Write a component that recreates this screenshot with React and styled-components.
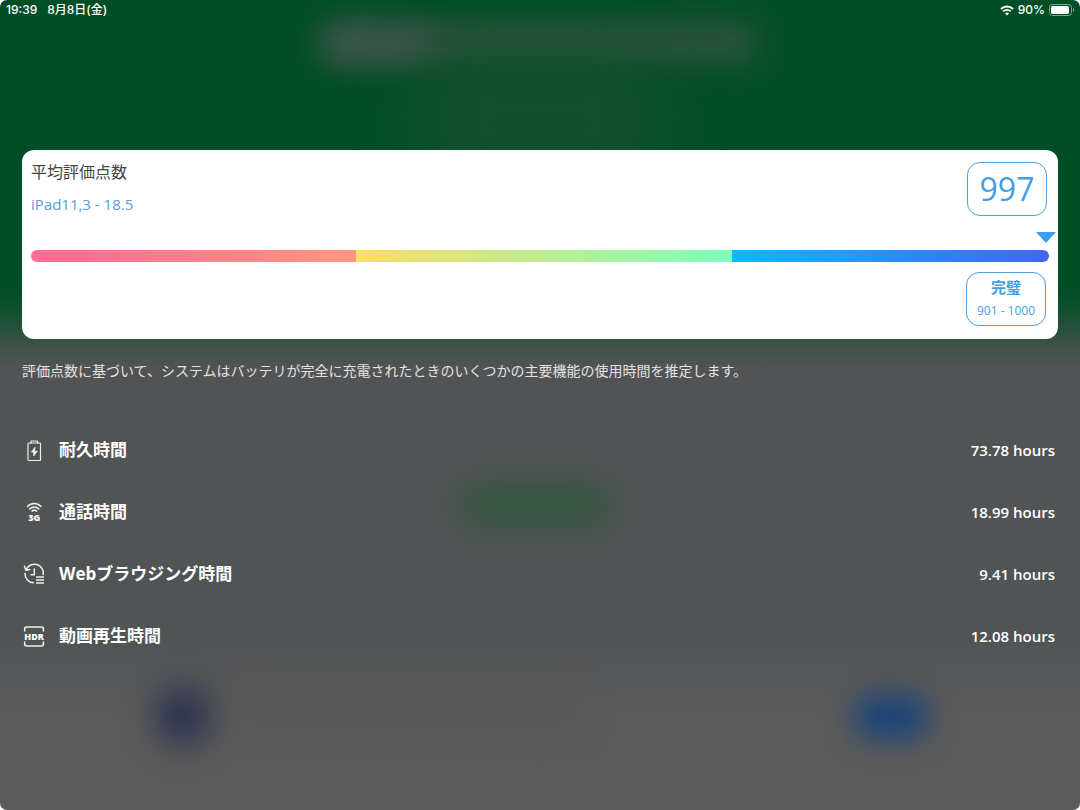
import React from "react";
import styled, { createGlobalStyle } from "styled-components";

const latin = `"Open Sans", "Noto Sans CJK JP", sans-serif`;

const GlobalStyle = createGlobalStyle`
  * {
    box-sizing: border-box;
  }

  body {
    margin: 0;
    background: #fff;
    font-family: ${latin};
  }

  h1, p, ul {
    margin: 0;
    padding: 0;
  }
`

const Page = styled.div`
  position: relative;
  overflow: hidden;
  isolation: isolate;
  min-height: 100vh;
  border-radius: 7px;
  color: #fff;
  background: linear-gradient(
    #004e26 0,
    #004e26 290px,
    #12502f 312px,
    #2e5140 334px,
    #43524b 350px,
    #515355 368px,
    #515455 450px,
    #515455 640px,
    #575859 690px,
    #5a5a5a 720px
  );
`

const Glow = styled.span`
  position: absolute;
  z-index: -1;
  left: ${(p) => p.$x};
  top: ${(p) => p.$y}px;
  width: ${(p) => p.$w}px;
  height: ${(p) => p.$h}px;
  border-radius: 24px;
  background: ${(p) => p.$color};
  filter: blur(${(p) => p.$blur || 16}px);
  transform: translateX(-50%);
`

const StatusBar = styled.header`
  display: flex;
  align-items: center;
  justify-content: space-between;
  height: 20px;
  padding: 0 5px 0 6px;
  font-family: Inter, "Noto Sans CJK JP", sans-serif;
  font-size: 12px;
  font-weight: 500;
  line-height: 20px;
`

const StatusGroup = styled.div`
  display: flex;
  align-items: center;
  gap: ${(p) => p.$gap}px;
`

const Main = styled.main`
  padding: 130px 22px 0;
`

const Card = styled.section`
  padding: 12px 9px 13px;
  border-radius: 12px;
  background: #fff;
`

const CardTop = styled.div`
  display: flex;
  justify-content: space-between;
  padding-right: 2px;
`

const Title = styled.h1`
  color: #444;
  font-size: 16px;
  font-weight: 400;
  line-height: 20px;
`

const Device = styled.p`
  margin-top: 12px;
  color: #5a9bd8;
  font-size: 15px;
  line-height: 20px;
`

const Badge = styled.div`
  display: flex;
  flex-direction: column;
  align-items: center;
  justify-content: center;
  width: 80px;
  height: 54px;
  border: 1px solid #4f9fdb;
  border-radius: 13px;
  color: #429fe6;
`

const Score = styled.strong`
  font-size: 32px;
  font-weight: 400;
  line-height: 52px;
`

const Grade = styled.strong`
  font-size: 15px;
  font-weight: 700;
  line-height: 24px;
`

const Range = styled.span`
  font-size: 12px;
  line-height: 24px;
`

const Gauge = styled.div`
  position: relative;
  padding: 34px 0 10px;
`

const Track = styled.div`
  display: grid;
  grid-template-columns: 325fr 375fr 317fr;
  height: 12px;
  overflow: hidden;
  border-radius: 6px;
`

const Segment = styled.span`
  background: linear-gradient(90deg, ${(p) => p.$from}, ${(p) => p.$to});
`

const Marker = styled.svg`
  position: absolute;
  top: 16px;
  width: 20px;
  height: 11px;
  transform: translateX(-50%);
`

const CardBottom = styled.div`
  display: flex;
  justify-content: flex-end;
  padding-right: 3px;
`

const Note = styled.p`
  margin-top: 21px;
  color: #e2e2e2;
  font-family: "Noto Sans CJK JP", sans-serif;
  font-size: 14px;
  line-height: 20px;
`

const List = styled.ul`
  margin-top: 39px;
  list-style: none;
`

const Row = styled.li`
  display: flex;
  align-items: center;
  height: 62px;
  padding-right: 3px;
`

const Icon = styled.svg`
  flex: none;
  width: 24px;
  height: 24px;
  margin-right: 13px;
  fill: none;
  stroke: #eee;
  stroke-linecap: round;
  stroke-linejoin: round;
`

const Label = styled.span`
  flex: 1;
  font-size: 17px;
  font-weight: 700;
  line-height: 24px;
`

const Value = styled.span`
  font-size: 15px;
  font-weight: 600;
  line-height: 24px;
`

const IconText = styled.text`
  fill: #fff;
  stroke: none;
  font-family: "Open Sans", sans-serif;
  font-weight: 800;
  text-anchor: middle;
`

const BatteryIcon = () => (
  <Icon viewBox="0 0 24 24" strokeWidth="1.2" aria-hidden="true">
    <rect x="6" y="5" width="12.5" height="17.5" rx="0.8" />
    <path d="M9 5V3h6.500v2" />
    <path d="M12.900 9.500l-3.500 4.500h2.300v4l3.600-4.700h-2.400z" fill="#eee" strokeWidth=".8" />
  </Icon>
)

const SignalIcon = () => (
  <Icon viewBox="0 0 24 24" strokeWidth="1.5" aria-hidden="true">
    <path d="M5.500 6.500c3.800-4 9.700-4 13.500 0M7.800 8.900c2.500-2.500 6.400-2.500 8.900 0M10 11.100c1.300-1.100 3.200-1.100 4.500 0" />
    <IconText x="12.2" y="21" fontSize="9">3G</IconText>
  </Icon>
)

const HistoryIcon = () => (
  <Icon viewBox="0 0 24 24" strokeWidth="1.5" aria-hidden="true">
    <path d="M4.200 7.500A9 9 0 0 1 21.300 12.500M3 11.500a9 9 0 0 0 8.500 9.300" />
    <path d="M2.500 4.200l1.300 4 4.100-.8M12.300 7v5.800H9" />
    <path d="M14 15h8M14 18h8M14 21h8" strokeLinecap="butt" />
  </Icon>
)

const HdrIcon = () => (
  <Icon viewBox="0 0 24 24" strokeWidth="1.6" aria-hidden="true">
    <path d="M2.700 7V5q0-2 2-2h14.700q2 0 2 2v2M2.700 18v2q0 2 2 2h14.700q2 0 2-2v-2" />
    <IconText x="12.100" y="16" fontSize="9">HDR</IconText>
  </Icon>
)

const WifiGlyph = () => (
  <svg width="14" height="11" viewBox="0 0 14 11" fill="none" stroke="#fff" strokeWidth="1.9" aria-label="Wi-Fi">
    <path d="M.9 4c3.500-3.300 8.700-3.300 12.200 0M3.200 6.400c2.200-2 5.400-2 7.600 0" />
    <path d="M7 10.500L4.900 8.300c1.200-1.100 3-1.100 4.200 0z" fill="#fff" stroke="none" />
  </svg>
)

const BatteryGlyph = () => (
  <svg width="26" height="12" viewBox="0 0 26 12" aria-hidden="true">
    <rect x=".5" y=".5" width="22" height="11" rx="3" fill="none" stroke="#7fa690" />
    <rect x="2" y="2" width="18" height="8" rx="1.700" fill="#fff" />
    <path d="M24 4c1.600.6 1.600 3.400 0 4z" fill="#7fa690" />
  </svg>
)

const score = 997;

const segments = [
  { from: "#ff6a95", to: "#ff9580" },
  { from: "#ffdc68", to: "#7dffbb" },
  { from: "#10b8ff", to: "#4366f2" },
]

const estimates = [
  { icon: BatteryIcon, label: "耐久時間", hours: "73.78" },
  { icon: SignalIcon, label: "通話時間", hours: "18.99" },
  { icon: HistoryIcon, label: "Webブラウジング時間", hours: "9.41" },
  { icon: HdrIcon, label: "動画再生時間", hours: "12.08" },
]

// soft shapes of the screen that lies under the overlay
const Backdrop = () => (
  <>
    <Glow $x="50%" $y={22} $w={440} $h={42} $color="#2f5340" />
    <Glow $x="35%" $y={30} $w={110} $h={28} $color="#435650" />
    <Glow $x="50%" $y={60} $w={240} $h={110} $color="#14502f" $blur={28} />
    <Glow $x="49.500%" $y={486} $w={150} $h={38} $color="#30573f" />
    <Glow $x="16.9%" $y={688} $w={54} $h={56} $color="#2b3150" />
    <Glow $x="82.500%" $y={694} $w={76} $h={46} $color="#1c457a" $blur={14} />
    <Glow $x="38%" $y={698} $w={340} $h={28} $color="#555" />
  </>
)

const App = () => {
  return (
    <>
      <GlobalStyle />
      <Page>
        <Backdrop />
        <StatusBar>
          <StatusGroup $gap={10}>
            <span>19:39</span>
            <span>8月8日(金)</span>
          </StatusGroup>
          <StatusGroup $gap={4}>
            <WifiGlyph />
            <span>90%</span>
            <BatteryGlyph />
          </StatusGroup>
        </StatusBar>
        <Main>
          <Card>
            <CardTop>
              <div>
                <Title>平均評価点数</Title>
                <Device>iPad11,3 - 18.5</Device>
              </div>
              <Badge>
                <Score>{score}</Score>
              </Badge>
            </CardTop>
            <Gauge>
              <Marker viewBox="0 0 20 11" style={{ left: `${score / 10}%` }} aria-hidden="true">
                <path d="M0 0h20L10 11z" fill="#3d9fea" />
              </Marker>
              <Track>
                {segments.map((s) => (
                  <Segment key={s.from} $from={s.from} $to={s.to} />
                ))}
              </Track>
            </Gauge>
            <CardBottom>
              <Badge>
                <Grade>完璧</Grade>
                <Range>901 - 1000</Range>
              </Badge>
            </CardBottom>
          </Card>
          <Note>
            評価点数に基づいて、システムはバッテリが完全に充電されたときのいくつかの主要機能の使用時間を推定します。
          </Note>
          <List>
            {estimates.map(({ icon: RowIcon, label, hours }) => (
              <Row key={label}>
                <RowIcon />
                <Label>{label}</Label>
                <Value>{hours} hours</Value>
              </Row>
            ))}
          </List>
        </Main>
      </Page>
    </>
  )
}

export default App;
